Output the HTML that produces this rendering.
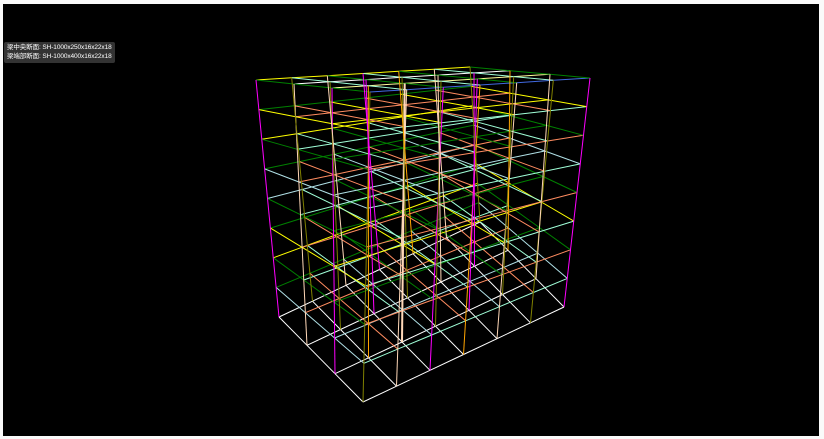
<!DOCTYPE html>
<html><head><meta charset="utf-8"><style>
html,body{margin:0;padding:0;background:#fafafa;width:824px;height:439px;overflow:hidden}
#bg{position:absolute;left:3px;top:4px;width:816px;height:432px;background:#000}
#lab{position:absolute;left:4px;top:42px;width:111px;height:21px;background:#333;border-radius:2px;color:#fff;font:6.5px/9px "Liberation Sans","Noto Sans CJK JP",sans-serif;padding:1px 0 0 3px;box-sizing:border-box;white-space:nowrap;letter-spacing:-0.1px}
svg{position:absolute;left:0;top:0}
</style></head><body>
<div id="bg"></div>
<svg id="s" width="824" height="439"></svg>
<div id="lab">梁中央断面: SH-1000x250x16x22x18<br>梁端部断面: SH-1000x400x16x22x18</div>
<script>
var F0=[363,402],R0=[564,307],L0=[279,317],B0=[480,222];
var F1=[370,92],R1=[590,78],L1=[256,80],B1=[470,67];
var NU=6,NV=3,NW=8;
function P(u,v,w){var a=u/NU,b=v/NV,c=w/NW;
 function bl(Pf,Pr,Pl,Pb,i){return (1-a)*(1-b)*Pf[i]+a*(1-b)*Pr[i]+(1-a)*b*Pl[i]+a*b*Pb[i];}
 var x0=bl(F0,R0,L0,B0,0),y0=bl(F0,R0,L0,B0,1),x1=bl(F1,R1,L1,B1,0),y1=bl(F1,R1,L1,B1,1);
 return [x0+(x1-x0)*c,y0+(y1-y0)*c];}
var out=[];
function L(p,q,col,wd){out.push('<line x1="'+p[0].toFixed(1)+'" y1="'+p[1].toFixed(1)+'" x2="'+q[0].toFixed(1)+'" y2="'+q[1].toFixed(1)+'" stroke="'+col+'" stroke-width="'+(wd||1)+'"/>');}
var cc=['#808000','#ffd8b8','#ff00ff','#ffa500','#ffd8b8','#808000','#ff00ff'];
var bc=['#ff8c60','#008000','#a0ffd8','#b0e0e6','#ff8c60','#008000','#a0ffd8','#ffff00'];
for(var w=0;w<=NW;w++){
 for(var v=0;v<=NV;v++)for(var u=0;u<NU;u++){var col=w==0?'#fff':(w==NW?['#4169e1','#ffff99','#fff','#ffff00'][v]:bc[(w*2+v)%bc.length]);L(P(u,v,w),P(u+1,v,w),col);}
 for(var u=0;u<=NU;u++)for(var v=0;v<NV;v++){var col=w==0?'#fff':bc[(w*2+1+u%2)%bc.length];L(P(u,v,w),P(u,v+1,w),col);}
}
for(var u=0;u<=NU;u++)for(var v=0;v<=NV;v++){L(P(u,v,0),P(u,v,NW),cc[(u+v*2)%cc.length],(u==2&&v==1)?2:1);}
document.getElementById('s').innerHTML=out.join('');
</script>
</body></html>
